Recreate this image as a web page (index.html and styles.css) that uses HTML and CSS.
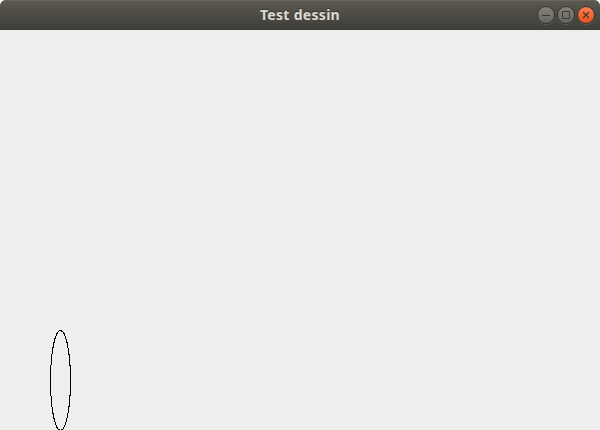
FILE: index.html
```
<!DOCTYPE html>
<html lang="fr">
<head>
<meta charset="utf-8">
<title>Test dessin</title>
<link rel="stylesheet" href="styles.css">
</head>
<body>
<div class="window">
  <header class="titlebar">
    <h1 class="title">Test dessin</h1>
    <div class="controls">
      <span class="control"><svg viewBox="0 0 18 18"><path d="M5 9.5h8"/></svg></span>
      <span class="control"><svg viewBox="0 0 18 18"><path d="M5.5 5.5h7v7h-7z"/></svg></span>
      <span class="control close"><svg viewBox="0 0 18 18"><path d="M6.2 6.2l5.6 5.6M11.8 6.2l-5.6 5.6"/></svg></span>
    </div>
  </header>
  <main class="canvas">
    <svg class="drawing" viewBox="0 0 600 400"><ellipse cx="60.5" cy="350.5" rx="10" ry="50"/></svg>
  </main>
</div>
</body>
</html>
```

FILE: styles.css
```
body {
  margin: 0;
  background: #fff;
  overflow: hidden;
}

.window {
  width: 600px;
  height: 430px;
  display: flex;
  flex-direction: column;
}

.titlebar {
  box-sizing: border-box;
  height: 30px;
  display: grid;
  grid-template-columns: 1fr auto 1fr;
  align-items: center;
  padding-right: 5px;
  padding-left: 5px;
  border-radius: 6px 6px 0 0;
  background: linear-gradient(#5b5950, #3e3d39);
  box-shadow: inset 0 1px #6a675e;
}

.title {
  grid-column: 2;
  margin: 0;
  font: bold 14px/30px "Noto Sans", sans-serif;
  letter-spacing: 0.3px;
  color: #dfdbd2;
  text-shadow: 0 -1px #33322e;
}

.controls {
  justify-self: end;
  display: flex;
  gap: 2px;
}

.control {
  box-sizing: border-box;
  width: 18px;
  height: 18px;
  border: 1px solid #35342f;
  border-radius: 50%;
  background: linear-gradient(#85837c, #65645e);
  box-shadow: 0 1px #5b5a53;
}

.control svg {
  display: block;
  width: 18px;
  height: 18px;
  margin: -1px;
  fill: none;
  stroke: #3a3934;
}

.close {
  background: linear-gradient(#f98057, #e4501f);
}

.close svg {
  stroke: #402b1e;
  stroke-width: 1.2;
}

.canvas {
  height: 400px;
  background: #eee;
}

.drawing {
  display: block;
  width: 600px;
  height: 400px;
  fill: none;
  stroke: #000;
  stroke-width: 1.04;
  shape-rendering: crispEdges;
}
```
